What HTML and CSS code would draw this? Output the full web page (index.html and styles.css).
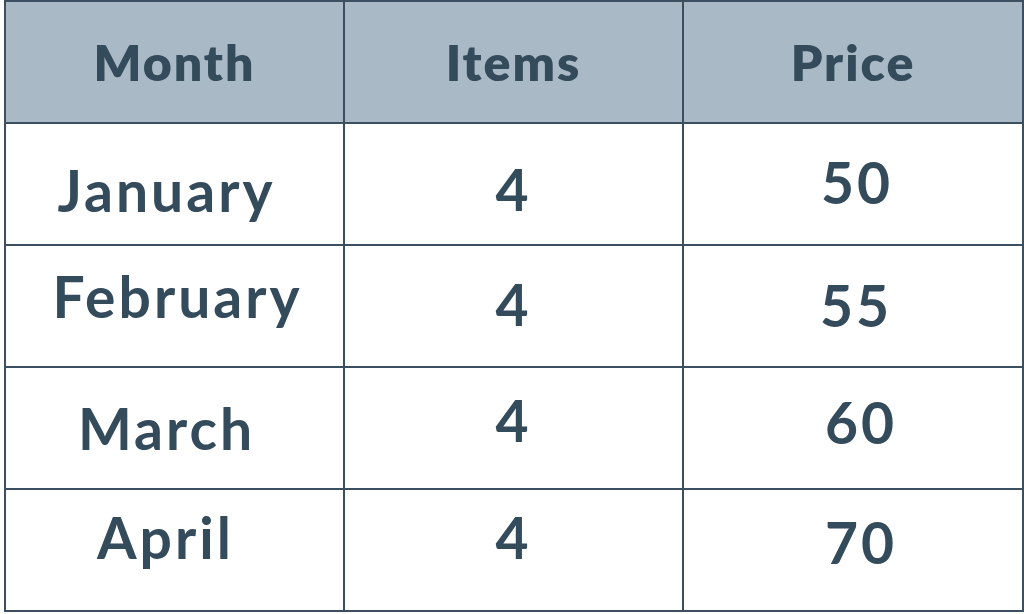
FILE: index.html
```html
<!DOCTYPE html>
<html lang="en">
<head>
<meta charset="utf-8">
<title>Monthly Items and Prices</title>
<link rel="stylesheet" href="styles.css">
</head>
<body>
<table class="price-table">
  <thead>
    <tr class="head-row">
      <th class="col-month">Month</th>
      <th class="col-items">Items</th>
      <th class="col-price">Price</th>
    </tr>
  </thead>
  <tbody>
    <tr class="body-row">
      <td class="down-6 left-8">January</td>
      <td class="down-5">4</td>
      <td class="up-2 right-4">50</td>
    </tr>
    <tr class="body-row">
      <td class="up-10 right-3">February</td>
      <td class="up-2">4</td>
      <td class="up-1 right-3">55</td>
    </tr>
    <tr class="body-row">
      <td class="left-8">March</td>
      <td class="up-8">4</td>
      <td class="up-6 right-8">60</td>
    </tr>
    <tr class="body-row">
      <td class="up-13 left-9">April</td>
      <td class="up-13">4</td>
      <td class="up-8 right-8">70</td>
    </tr>
  </tbody>
</table>
</body>
</html>
```
FILE: styles.css
```css
html, body {
  margin: 0;
  padding: 0;
  background: #ffffff;
}

body {
  font-family: "Lato", "Liberation Sans", sans-serif;
  color: #344b5c;
}

.price-table {
  margin: 0 0 0 4px;
  width: 1020px;
  border-collapse: separate;
  border-spacing: 0;
  border-top: 2px solid #3b4f60;
  border-left: 2px solid #3b4f60;
  table-layout: fixed;
}

.price-table th,
.price-table td {
  padding: 0;
  text-align: center;
  vertical-align: middle;
  border-right: 2px solid #3b4f60;
  border-bottom: 2px solid #3b4f60;
  line-height: 1;
  white-space: nowrap;
}

.col-month { width: 337px; }
.col-items { width: 337px; }
.col-price { width: 338px; }

.head-row {
  height: 122px;
}

.head-row th {
  background: #a9b9c6;
  font-size: 50px;
  font-weight: 800;
  letter-spacing: 2px;
}

.body-row {
  height: 122px;
}

.body-row td {
  font-size: 57px;
  font-weight: 700;
  letter-spacing: 3px;
}

/* small per-cell nudges that reproduce the source's uneven text placement */
.price-table .down-5 { padding-top: 10px; }
.price-table .down-6 { padding-top: 12px; }
.price-table .up-1 { padding-bottom: 2px; }
.price-table .up-2 { padding-bottom: 4px; }
.price-table .up-6 { padding-bottom: 12px; }
.price-table .up-8 { padding-bottom: 16px; }
.price-table .up-10 { padding-bottom: 20px; }
.price-table .up-13 { padding-bottom: 26px; }

.price-table .left-8 { padding-right: 16px; }
.price-table .left-9 { padding-right: 18px; }
.price-table .right-3 { padding-left: 6px; }
.price-table .right-4 { padding-left: 8px; }
.price-table .right-8 { padding-left: 16px; }
```
